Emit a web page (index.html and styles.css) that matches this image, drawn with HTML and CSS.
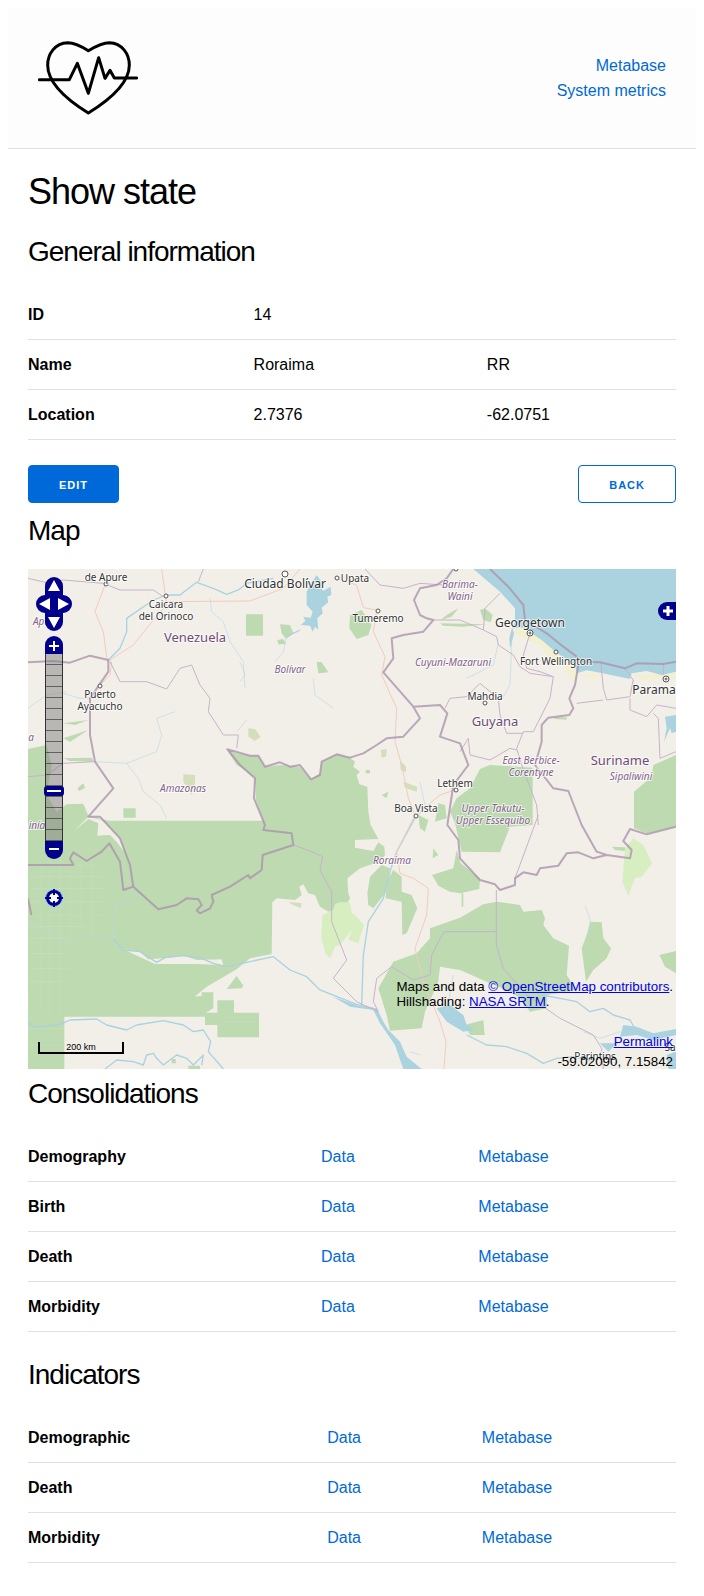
FILE: index.html
```html
<!DOCTYPE html>
<html lang="en">
<head>
<meta charset="utf-8">
<title>Show state</title>
<link rel="stylesheet" href="styles.css">
</head>
<body>
<header class="topbar">
  <a class="logo" href="#" aria-label="Home">
    <svg viewBox="114 114 300 240" width="100" height="80" fill="none" stroke="#000" stroke-width="9" stroke-linejoin="round" stroke-linecap="round">
      <path d="M265 152C240 136 218 128 203 128C165 129 143 162 143 195C143 250 205 302 265 339C325 302 388 250 388 195C388 162 366 129 328 128C310 128 290 137 265 152Z"/>
      <path d="M118 239H208L232 190L265 280L296 173L315 235L330 211L343 234H410"/>
    </svg>
  </a>
  <nav class="topnav">
    <a href="#">Metabase</a>
    <a href="#">System metrics</a>
  </nav>
</header>

<main class="content">
  <h1>Show state</h1>

  <h2>General information</h2>
  <table class="grid">
    <tr><th scope="row">ID</th><td>14</td><td></td></tr>
    <tr><th scope="row">Name</th><td>Roraima</td><td>RR</td></tr>
    <tr><th scope="row">Location</th><td>2.7376</td><td>-62.0751</td></tr>
  </table>
  <div class="actions">
    <button class="button" type="button">Edit</button>
    <button class="button button-outline" type="button">Back</button>
  </div>

  <h2>Map</h2>
  <div class="map">
    <svg class="map-tiles" viewBox="0 0 648 500" preserveAspectRatio="xMidYMid slice" role="img" aria-label="Map of Roraima and neighbouring regions">
      <g transform="scale(.33333) translate(-24 -12)">
        <rect class="land" x="0" y="0" width="2000" height="1530"/>
        <path class="beach" d="M1475 190L1510 188L1565 225L1608 262L1665 300L1670 325L1660 355L1630 300L1590 285L1560 240L1500 215ZM1672 326H1745L1720 345ZM1840 330L1968 325V340L1860 345Z"/>
        <path class="wood" d="M24 552L80 540L95 600L80 690L110 740L140 718L190 716L205 752L265 767H730L708 705L705 640L660 605L650 600L622 555L650 565L690 572L715 572L735 605L780 600L840 605L873 643L900 625L905 590L950 568L990 578L1005 590L1000 605L1020 620L1010 630L1018 658L1042 665L1045 740L1052 780L1075 822L1005 825L1005 848L1060 858L1075 832L1093 845L1095 870L1075 895L1055 898L1020 910L982 940L985 985L990 1000L980 1020L950 1015L940 1035L925 1040L900 1025L885 990L865 985L850 958L838 965L845 990L825 1005L770 1000L757 1012L755 1167L690 1180L650 1213L560 1265L497 1317L520 1295L545 1293V1282H580V1330L555 1345V1355H24ZM24 1355H133V1512H24ZM555 1343H592V1306H642V1343H717V1417H592V1380H555ZM620 1272L650 1232L670 1262L665 1270ZM1042 985L1050 935L1085 900L1110 910L1095 985L1060 1030L1045 1020ZM1120 915L1145 935V980L1175 990L1192 1030L1160 1105L1147 1110L1145 1010L1097 1000L1100 950ZM1236 930L1300 910L1310 855L1322 895L1380 940L1378 972L1320 985L1290 980L1255 962ZM1380 612L1410 600L1538 608V780L1470 785L1440 862L1325 860L1305 775L1290 740L1310 700L1350 670ZM1968 570L1900 600L1895 635L1842 680V790L1880 805L1968 785ZM1230 1090L1320 1058L1390 1018L1430 1010L1500 1020L1510 1040L1565 1035L1575 1060L1570 1080L1600 1120L1647 1142L1640 1230L1670 1275L1580 1290V1330L1530 1340L1500 1300L1470 1280L1400 1250L1320 1215L1260 1205L1255 1250L1215 1340L1205 1390L1110 1397L1100 1350L1075 1270L1120 1190L1190 1165L1230 1120ZM1710 1070L1745 1072L1750 1120L1773 1150L1760 1180L1720 1215L1698 1250L1685 1150L1700 1110ZM1918 1170L1968 1158V1225L1935 1205ZM678 148H729V212H678ZM990 150L1025 135L1055 180L1045 210L1010 222L988 190ZM780 178L810 180L820 205L798 222L785 205ZM772 225L790 222L798 237L775 238ZM890 290L905 292L925 322L895 325ZM310 730H347V758H310ZM1380 135L1395 130L1418 150L1412 172L1390 165ZM1260 175L1400 178L1330 185L1270 182ZM1315 130L1295 155L1262 165L1280 150ZM1600 457H1640V464L1605 462ZM130 475L205 465L165 480ZM130 520L205 495L150 530ZM130 580L215 578L222 590L150 588ZM172 670L190 655L195 668L178 678ZM1240 850L1255 870L1238 880ZM1335 1380L1390 1365L1394 1410H1350ZM1776 845L1815 847V858L1785 855ZM1085 690L1105 680L1100 700ZM1255 715L1275 720L1280 760L1245 770ZM1195 750L1225 765L1215 800L1200 790ZM1037 615H1050V625H1037ZM455 1482H467V1495H455ZM505 1502H540V1512H505ZM1325 985H1330V1025H1325Z"/>
        <path class="scrub" d="M1840 820L1870 840L1897 895L1865 935L1845 940L1825 993L1807 950L1815 850ZM907 1050L940 1035L945 1018L960 1012L990 1012L995 1045L1005 1050L1032 1080L1015 1135L985 1125L995 1095L980 1115L960 1140L945 1145L932 1178L918 1170L904 1120Z"/>
        <path class="tan" d="M490 628L525 630V655L515 690L490 650ZM685 490L705 492L722 515L705 528L685 515ZM1082 555L1100 552L1098 575L1085 578ZM1140 585L1158 605V622L1142 615ZM1150 650L1192 665L1190 680L1155 668ZM805 1010L845 1015L842 1030L815 1018Z"/>
        <path class="land" d="M160 800L205 755L245 765L300 820L312 860L290 830L270 810L232 812L235 775L205 762ZM310 1152L360 1160L385 1183L430 1180L490 1172L530 1185L605 1183L610 1200L525 1197H405L340 1167Z"/>
        <path class="haze" d="M40 900H240M30 935H250M26 970H260M26 1010H250M26 1050H270M26 1085H200M26 1120H150M26 1165H140M26 1210H145M26 1250H140M60 870V1350M90 870V1350M120 870V1340M150 900V1120M180 890V1100M215 880V1110M24 1390H133M24 1440H133M600 1370H710"/>
        <path class="water" d="M1360 12L1440 80L1485 130V172L1475 190L1510 188L1565 225L1608 262L1665 300L1670 325L1700 316L1745 324L1830 342L1835 325L1880 318L1925 330L1968 320V12ZM1476 188L1482 205L1475 235L1470 250L1468 220ZM860 80L870 60L890 30L905 50L908 78L932 65L934 90L922 95L925 112L905 128L908 145L892 160L895 195L885 185L878 200L870 182L842 180L856 168L850 155L872 158L878 140L860 120ZM1935 455L1968 450V500L1955 505L1950 490L1932 530L1940 490ZM1250 1330L1290 1320L1330 1350L1340 1380L1365 1395L1330 1400L1280 1370ZM940 1295L1015 1322L1070 1330L1090 1370L1105 1395L1140 1430L1160 1475L1205 1512H1150L1125 1440L1080 1375L1060 1335L990 1325ZM1740 1435L1790 1435L1765 1460ZM1810 1380L1850 1385L1900 1405L1968 1392V1410L1900 1425L1850 1410L1800 1415ZM1940 1470L1968 1460V1512H1945Z"/>
        <path class="river wide" d="M265 285L300 250L320 200V160L400 105L440 90L480 90L530 52L580 70L620 88L655 75L680 55L760 40M280 1120L310 1155L360 1160L410 1192L435 1178L490 1172L540 1178L580 1195L620 1205L690 1190L760 1175L810 1215L860 1235L900 1275L1010 1318L1060 1330M1190 750L1130 860L1110 920L1090 1000L1045 1070L1030 1170L1025 1320M24 1372L45 1387L120 1378L150 1365L230 1362L260 1380L320 1395L350 1380L430 1367L490 1380L520 1400L550 1395L572 1430L565 1460L610 1512M255 1512L290 1485L340 1490L370 1500L380 1470L400 1465L410 1480L430 1500L470 1470L500 1480L520 1500L550 1470L545 1500M1565 1290L1620 1300L1670 1310L1710 1340L1750 1330L1780 1350L1830 1365L1850 1400M1340 1410L1400 1440L1460 1445L1520 1465L1570 1495L1610 1480L1660 1475L1720 1490M840 195L800 215"/>
        <path class="river" d="M225 590L320 595L410 560L425 510L410 460L465 440M320 595L355 640L370 680L420 720L440 760M280 1120L282 1060L290 1015L345 1015L350 985L338 970M24 1070L80 1095L115 1110L150 1135L190 1110L270 1125M570 100L575 140L610 170L630 230L670 290L675 370M660 290L675 330L660 350M800 215L790 260L765 290M880 340L885 390L940 430M1475 235L1470 360L1450 395M1435 235L1420 300L1340 340M1696 1022L1712 1070L1705 1110M1840 345L1830 385M130 385L180 400L240 400M24 430L80 390L140 380M1200 650L1215 720L1190 760M1280 1340L1300 1230M1690 1400L1740 1420L1800 1400M680 465L650 500M1170 1460L1200 1470"/>
        <path class="road" d="M255 60L225 140L250 200L262 290L340 240L400 165L440 120L425 12M430 110L690 108L790 70L840 12M275 290L270 330L240 360M1010 60L1030 128L1070 135L1060 200L1095 275L1085 330L1130 430L1125 530L1145 600L1165 700L1185 750L1155 810L1130 860L1140 925L1180 940L1225 970L1220 1050L1185 1150L1210 1250L1260 1370L1278 1430L1272 1512M1188 750L1260 690L1305 675M950 40L1010 60"/>
        <path class="region" d="M270 290L300 350L380 350L440 372L480 310L515 300L540 360L570 400L565 440L610 510L655 510L650 550M24 40L90 55L130 45L250 55L300 75L400 75L430 95M535 50L550 12M1035 12L1080 60L1150 70L1200 55L1270 60M24 635L80 630L130 595L225 590M820 840L870 858L908 875L900 915L935 980L935 1070L980 1185L940 1240L1010 1310L1075 1340L1060 1310L1070 1240L1115 1205L1180 1245L1230 1230L1235 1170L1272 1100H1429M1429 975V1140L1450 1210L1520 1290L1620 1360L1720 1410L1745 1450L1750 1512M1555 750L1485 940M1555 780L1550 720L1505 600L1490 550L1510 500H1540L1590 400L1600 335L1560 320L1520 310L1510 270L1530 205M1600 335L1530 325L1500 305L1480 270L1435 240L1430 215L1390 195L1395 130L1440 85M1240 165L1320 165L1390 195M1275 430L1290 400L1340 395L1380 355L1435 400L1440 450L1460 505H1510M1320 560L1345 520L1350 570L1410 585L1470 550L1490 555M1742 290L1750 370L1760 405L1830 395L1840 345L1815 312M1670 415L1750 405M1830 400V435L1880 455L1910 420L1968 430M1900 445L1915 460L1920 580L1968 560M1930 297V330"/>
        <path class="border" d="M1300 12L1280 40L1250 60L1200 70L1182 105L1200 150L1220 160L1240 165L1210 200L1150 210L1115 220L1120 280L1090 322L1180 425L1200 460L1150 515L1100 520L1070 540L1030 565L990 578L950 568L905 590L900 630L873 643L840 600L810 605L780 592L735 605L715 572H690L622 553L660 600L705 640L702 700L735 780L730 795L815 805L820 840L728 870L725 915L690 940L685 930L630 965L575 990L580 1010L570 1030L540 1045L530 1036L545 1020L535 1003L500 1000L470 1020L415 1033L340 965L330 900L300 820L240 755H205L280 670L225 590L210 510V400L265 320V285L210 272L150 293L100 288L24 292M1180 425L1260 420L1282 445L1260 515L1320 535L1345 600L1300 660L1282 780L1315 825L1320 880L1380 945L1425 958L1440 975L1485 960V940L1510 922L1550 930L1560 910L1615 902L1640 865L1675 862L1720 880L1760 870L1830 880L1835 855L1810 828L1830 792L1880 808L1968 785M1675 300L1665 360L1648 400L1660 430L1648 450L1585 458L1565 480V530L1545 600L1600 670L1645 678L1685 780L1730 860L1760 870M24 900H160L150 880L160 862L200 888L245 860L268 835L300 890L310 975L340 965M24 1000L34 1050"/>
        <path class="border" d="M1410 12L1465 65L1510 120L1515 165L1580 205L1630 245L1690 290L1740 292L1815 310L1850 295L1930 297L1968 290"/>
      </g>
      <g class="dots">
        <circle cx="78" cy="15" r="2"/><circle cx="138" cy="27" r="2"/><circle cx="72" cy="117" r="2"/><circle cx="257" cy="5" r="3"/><circle cx="309" cy="9" r="2"/><circle cx="350" cy="42" r="2"/><circle cx="428" cy="0" r="2"/><circle cx="502" cy="64" r="3"/><circle cx="502" cy="64" r="1"/><circle cx="528" cy="83" r="2"/><circle cx="457" cy="134" r="2"/><circle cx="638" cy="110" r="3"/><circle cx="638" cy="110" r="1"/><circle cx="428" cy="221" r="2"/><circle cx="388" cy="247" r="2"/>
      </g>
      <g class="labels">
        <g class="town">
          <text x="78" y="12">de Apure</text><text x="138" y="39">Caicara</text><text x="138" y="51">del Orinoco</text>
          <text x="72" y="129">Puerto</text><text x="72" y="141">Ayacucho</text><text x="327" y="13">Upata</text>
          <text x="350" y="53">Tumeremo</text><text x="528" y="96">Fort Wellington</text><text x="457" y="131">Mahdia</text>
          <text x="427" y="218">Lethem</text><text x="388" y="243">Boa Vista</text><text x="567" y="491">Parintins</text><text x="642" y="482">Sa</text>
        </g>
        <g class="city">
          <text x="257" y="19">Ciudad Bolívar</text><text x="502" y="58">Georgetown</text><text x="626" y="125">Parama</text>
        </g>
        <g class="country">
          <text x="167" y="73">Venezuela</text><text x="467" y="157">Guyana</text><text x="592" y="196">Suriname</text>
        </g>
        <g class="state">
          <text x="18" y="56">Apure</text><text x="3" y="172">a</text><text x="9" y="260">inía</text><text x="155" y="223">Amazonas</text>
          <text x="262" y="104">Bolívar</text><text x="432" y="19">Barima-</text><text x="432" y="31">Waini</text><text x="425" y="97">Cuyuni-Mazaruni</text>
          <text x="503" y="195">East Berbice-</text><text x="503" y="207">Corentyne</text><text x="603" y="211">Sipaliwini</text>
          <text x="465" y="243">Upper Takutu-</text><text x="465" y="255">Upper Essequibo</text><text x="364" y="295">Roraima</text>
        </g>
      </g>
    </svg>

    <div class="map-controls">
      <svg class="pan" width="36" height="54" viewBox="0 0 36 54" role="img" aria-label="Pan">
        <path class="navy" d="M9 9a9 9 0 0 1 18 0v9a9 9 0 0 1 0 18v9a9 9 0 0 1-18 0v-9a9 9 0 0 1 0-18z"/>
        <path fill="#fff" d="M18 3l6 11H12zM18 51l6-11H12zM3 27l11-6v12zM33 27l-11-6v12z"/>
      </svg>
      <div class="zoom">
        <button class="zoom-button zoom-in" type="button" aria-label="Zoom in"><svg width="18" height="18" viewBox="0 0 18 18"><path d="M4 10h10M9 5v10"/></svg></button>
        <div class="ladder"><span class="handle"></span></div>
        <button class="zoom-button zoom-out" type="button" aria-label="Zoom out"><svg width="18" height="18" viewBox="0 0 18 18"><path d="M4 8h10"/></svg></button>
      </div>
      <button class="locate" type="button" aria-label="Zoom to full extent">
        <svg width="18" height="18" viewBox="0 0 18 18"><circle cx="9" cy="9" r="9" fill="#8cc8ff"/><circle cx="9" cy="9" r="8" class="navy"/><circle cx="9" cy="9" r="5" fill="#fff"/><path class="navy" d="M8 0h2v6H8zM8 12h2v6H8zM0 8h6v2H0zM12 8h6v2h-6z"/></svg>
      </button>
    </div>
    <button class="layers" type="button" aria-label="Show layers"><svg width="18" height="18" viewBox="0 0 18 18"><path d="M5 9h10M10 4v10"/></svg></button>
    <div class="scale">200 km</div>
    <div class="attribution">Maps and data <a href="#">© OpenStreetMap contributors</a>.<br>Hillshading: <a href="#">NASA SRTM</a>.</div>
    <div class="position"><a href="#">Permalink</a><span>-59.02090, 7.15842</span></div>
  </div>

  <h2>Consolidations</h2>
  <table class="grid">
    <tr><th scope="row">Demography</th><td><a href="#">Data</a></td><td><a href="#">Metabase</a></td></tr>
    <tr><th scope="row">Birth</th><td><a href="#">Data</a></td><td><a href="#">Metabase</a></td></tr>
    <tr><th scope="row">Death</th><td><a href="#">Data</a></td><td><a href="#">Metabase</a></td></tr>
    <tr><th scope="row">Morbidity</th><td><a href="#">Data</a></td><td><a href="#">Metabase</a></td></tr>
  </table>

  <h2>Indicators</h2>
  <table class="grid">
    <tr><th scope="row">Demographic</th><td><a href="#">Data</a></td><td><a href="#">Metabase</a></td></tr>
    <tr><th scope="row">Death</th><td><a href="#">Data</a></td><td><a href="#">Metabase</a></td></tr>
    <tr><th scope="row">Morbidity</th><td><a href="#">Data</a></td><td><a href="#">Metabase</a></td></tr>
  </table>
</main>
</body>
</html>
```

FILE: styles.css
```css
* { box-sizing: border-box; }
body { margin: 8px; background: #fff; color: #000; font: 16px/25px "Liberation Sans", Arial, sans-serif; }
a { color: #0069d9; text-decoration: none; }

.topbar { display: flex; align-items: center; justify-content: space-between; padding: 30px; background: #fdfdfd; border-bottom: 1px solid #e1e1e1; }
.logo svg { display: block; }
.topnav { display: flex; flex-direction: column; align-items: flex-end; }

.content { padding: 21px 20px 0; }
h1, h2 { margin: 0 0 20px; font-weight: 400; letter-spacing: -1px; }
h1 { font-size: 36px; line-height: 43px; }
h2 { font-size: 28px; line-height: 38px; margin-bottom: 19px; }

.grid { width: 100%; margin-bottom: 24px; border-collapse: separate; border-spacing: 0; }
.grid th, .grid td { padding: 12px 15px; text-align: left; border-bottom: 1px solid #e1e1e1; }
.grid th:first-child { padding-left: 0; }
.grid td:last-child { padding-right: 1px; }

.actions { display: flex; justify-content: space-between; padding: 1px 0 9px; }
.button { height: 38px; padding: 0 30px; border: 1px solid #0069d9; border-radius: 4px; background: #0069d9; color: #fff; font: bold 11px/38px "Liberation Sans", Arial, sans-serif; letter-spacing: 1px; text-transform: uppercase; }
.button-outline { background: transparent; color: #0069d9; }

.map { position: relative; height: 500px; margin-bottom: 6px; overflow: hidden; }
.map-tiles { display: block; width: 100%; height: 100%; }
.land { fill: #f2efe9; }
.beach { fill: #f2f0d0; }
.wood { fill: #bddab1; }
.scrub { fill: #d7efc0; }
.tan { fill: #d3dfbb; }
.water { fill: #aad3df; }
.haze { fill: none; stroke: #c9dfbd; stroke-width: 2; }
.river { fill: none; stroke: #b9dae4; stroke-width: 2; stroke-linejoin: round; }
.river.wide { stroke: #a9d2e0; stroke-width: 4; }
.road { fill: none; stroke: #f5c9bd; stroke-width: 3; stroke-linejoin: round; }
.region { fill: none; stroke: #c8b2ca; stroke-width: 3; stroke-linejoin: round; }
.border { fill: none; stroke: #ab93ad; stroke-opacity: .8; stroke-width: 6; stroke-linejoin: round; }
.dots { fill: #fff; stroke: #555; stroke-width: 1; }
.labels { font-family: "Noto Sans", sans-serif; text-anchor: middle; paint-order: stroke; stroke: #fff; stroke-opacity: .7; stroke-width: 2; stroke-linejoin: round; }
.town { font-size: 10px; fill: #333; }
.city { font-size: 12px; fill: #333; }
.country { font-size: 13px; fill: #6f4b75; }
.state { font-size: 10px; font-style: italic; fill: #82628a; }

.navy { fill: #00008b; }
.map-controls { position: absolute; top: 8px; left: 8px; display: flex; flex-direction: column; align-items: center; }
.zoom { display: flex; flex-direction: column; align-items: center; margin: 5px 0 30px; }
.zoom-button, .layers, .locate { display: block; width: 18px; height: 18px; padding: 0; border: 0; background: #00008b; }
.zoom-button svg, .layers svg, .locate svg, .pan { display: block; }
.zoom-button path, .layers path { fill: none; stroke: #fff; stroke-width: 2; }
.zoom-in { border-radius: 9px 9px 0 0; }
.zoom-out { border-radius: 0 0 9px 9px; }
.locate { background: transparent; }
.ladder { position: relative; width: 18px; height: 187px; border: 1px solid #333; border-width: 0 1px; background: repeating-linear-gradient(rgba(128, 128, 128, .5) 0 10px, rgba(50, 50, 50, .75) 10px 11px); }
.handle { position: absolute; top: 132px; left: -2px; width: 20px; height: 10px; border: solid #00008b; border-width: 4px 3px; border-radius: 3px; background: #fff; }
.layers { position: absolute; top: 33px; right: 0; border-radius: 9px 0 0 9px; }
.layers path { stroke-width: 3; }
.scale { position: absolute; left: 10px; bottom: 15px; width: 86px; height: 12px; border: 2px solid #000; border-top: 0; font-size: 9px; line-height: 11px; text-align: center; }
.attribution, .position { position: absolute; right: 3px; font-size: smaller; line-height: 15px; }
.attribution { bottom: 60px; }
.attribution a, .position a { color: #00e; text-decoration: underline; }
.position { bottom: 0; display: flex; flex-direction: column; align-items: flex-end; gap: 5px; }
```
